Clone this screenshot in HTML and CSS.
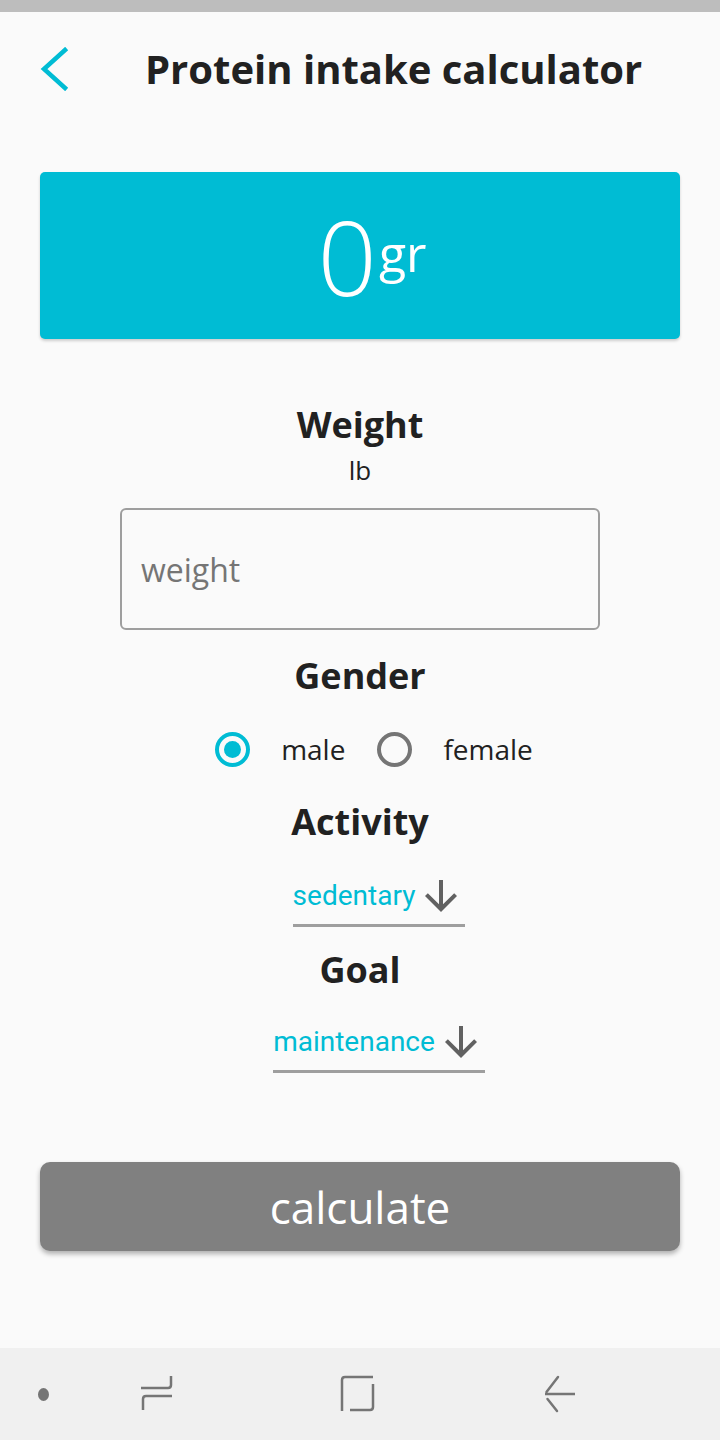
FILE: index.html
```html
<!DOCTYPE html>
<html lang="en">
<head>
    <meta charset="UTF-8">
    <meta name="viewport" content="width=device-width, initial-scale=1.0">
    <title>Protein intake calculator</title>
    <link rel="stylesheet" href="styles.css">
</head>
<body>

<div class="status-bar"></div>

<div class="screen">
    <div class="header">
        <button class="back-btn" aria-label="back">
            <svg width="30" height="44" viewBox="0 0 30 44">
                <path d="M25 3 L4 22 L25 41" fill="none" stroke="#00bcd4" stroke-width="4.5" stroke-linecap="square"/>
            </svg>
        </button>
        <h1 class="title">Protein intake calculator</h1>
    </div>

    <div class="result-card">
        <span class="result-value">0</span><span class="result-unit">gr</span>
    </div>

    <h2 class="label label-weight">Weight</h2>
    <div class="unit">lb</div>
    <div class="input-box">
        <input type="number" placeholder="weight">
    </div>

    <h2 class="label label-gender">Gender</h2>
    <div class="radio-row">
        <label class="radio">
            <span class="radio-circle checked"></span>
            <span class="radio-text">male</span>
        </label>
        <label class="radio">
            <span class="radio-circle"></span>
            <span class="radio-text">female</span>
        </label>
    </div>

    <h2 class="label label-activity">Activity</h2>
    <div class="dropdown dropdown-activity">
        <span class="dropdown-text">sedentary</span>
        <svg class="dropdown-arrow" width="48" height="48" viewBox="0 0 24 24">
            <path d="M20 12l-1.41-1.41L13 16.17V4h-2v12.17l-5.58-5.59L4 12l8 8 8-8z" fill="#616161"/>
        </svg>
    </div>

    <h2 class="label label-goal">Goal</h2>
    <div class="dropdown dropdown-goal">
        <span class="dropdown-text">maintenance</span>
        <svg class="dropdown-arrow" width="48" height="48" viewBox="0 0 24 24">
            <path d="M20 12l-1.41-1.41L13 16.17V4h-2v12.17l-5.58-5.59L4 12l8 8 8-8z" fill="#616161"/>
        </svg>
    </div>

    <button class="calc-btn">calculate</button>
</div>

<div class="nav-bar">
    <span class="nav-dot"></span>
    <svg class="nav-icon nav-recents" width="40" height="40" viewBox="0 0 40 40">
        <path d="M34 2 V11 Q34 14 31 14 H4" fill="none" stroke="#757575" stroke-width="2.5"/>
        <path d="M35 22 H9 Q6 22 6 25 V36" fill="none" stroke="#757575" stroke-width="2.5"/>
    </svg>
    <svg class="nav-icon nav-home" width="40" height="40" viewBox="0 0 40 40">
        <path d="M37 3 H9 Q6 3 6 6 V37" fill="none" stroke="#757575" stroke-width="2.5"/>
        <path d="M37 10 V33 Q37 36 34 36 H14" fill="none" stroke="#757575" stroke-width="2.5"/>
    </svg>
    <svg class="nav-icon nav-back" width="40" height="40" viewBox="0 0 40 40">
        <path d="M6 20 H36" fill="none" stroke="#757575" stroke-width="2.5"/>
        <path d="M19 3 L7.5 18" fill="none" stroke="#757575" stroke-width="2.5" stroke-linecap="round"/>
        <path d="M8.5 25 L18 37" fill="none" stroke="#757575" stroke-width="2.5" stroke-linecap="round"/>
    </svg>
</div>

</body>
</html>
```

FILE: styles.css
```css
body {
    margin: 0;
    width: 720px;
    height: 1440px;
    display: flex;
    flex-direction: column;
    background-color: #fafafa;
    font-family: "Open Sans", "DejaVu Sans", sans-serif;
    color: #212121;
}
.status-bar {
    height: 12px;
    background-color: #bdbdbd;
}
.screen {
    flex: 1;
    display: flex;
    flex-direction: column;
    align-items: center;
    padding: 0 40px;
}
.header {
    align-self: stretch;
    height: 114px;
    display: flex;
    align-items: center;
}
.back-btn {
    background: none;
    border: none;
    padding: 0;
    width: 30px;
    height: 44px;
    cursor: pointer;
}
.title {
    flex: 1;
    margin: 0 0 0 75px;
    font-size: 40px;
    font-weight: 700;
    line-height: 48px;
    white-space: nowrap;
}
.result-card {
    align-self: stretch;
    margin-top: 46px;
    height: 167px;
    background-color: #00bcd4;
    border-radius: 5px;
    box-shadow: 0 2px 3px rgba(0, 0, 0, 0.18);
    display: flex;
    align-items: center;
    justify-content: center;
    color: #ffffff;
    padding-left: 24px;
}
.result-value {
    font-size: 104px;
    font-weight: 300;
    line-height: 110px;
}
.result-unit {
    font-size: 50px;
    font-weight: 400;
    line-height: 60px;
    margin-top: -6px;
    margin-left: 2px;
}
.label {
    margin: 0;
    font-size: 36px;
    font-weight: 700;
    line-height: 40px;
}
.label-weight {
    margin-top: 66px;
}
.unit {
    font-size: 26px;
    line-height: 30px;
    margin-top: 10px;
}
.input-box {
    margin-top: 23px;
    width: 437px;
    height: 118px;
    border: 2px solid #9e9e9e;
    border-radius: 6px;
    display: flex;
    align-items: center;
    padding: 0 20px 0 19px;
}
.input-box input {
    border: none;
    background: transparent;
    outline: none;
    width: 100%;
    padding: 0;
    font-family: "Open Sans", sans-serif;
    font-size: 32px;
    color: #212121;
}
.input-box input::placeholder {
    color: #757575;
}
.label-gender {
    margin-top: 26px;
}
.radio-row {
    margin-top: 31px;
    height: 44px;
    display: flex;
    align-items: center;
    gap: 32px;
    margin-left: 28px;
}
.radio {
    display: flex;
    align-items: center;
    gap: 31px;
}
.radio-circle {
    width: 27px;
    height: 27px;
    border: 4px solid #757575;
    border-radius: 50%;
    position: relative;
}
.radio-circle.checked {
    border-color: #00bcd4;
}
.radio-circle.checked::after {
    content: "";
    position: absolute;
    left: 5px;
    top: 5px;
    width: 17px;
    height: 17px;
    border-radius: 50%;
    background-color: #00bcd4;
}
.radio-text {
    font-size: 28px;
    line-height: 36px;
}
.label-activity {
    margin-top: 31px;
}
.dropdown {
    display: flex;
    align-items: center;
    border-bottom: 3px solid #9e9e9e;
    padding-bottom: 4px;
    margin-left: 38px;
}
.dropdown-text {
    font-family: Roboto, sans-serif;
    font-size: 28px;
    line-height: 40px;
    color: #00bcd4;
}
.dropdown-arrow {
    margin-left: 2px;
}
.dropdown-activity {
    margin-top: 30px;
}
.label-goal {
    margin-top: 23px;
}
.dropdown-goal {
    margin-top: 28px;
}
.calc-btn {
    align-self: stretch;
    margin-top: 89px;
    height: 89px;
    border: none;
    border-radius: 10px;
    background-color: #808080;
    color: #ffffff;
    font-family: "Open Sans", sans-serif;
    font-size: 44px;
    box-shadow: 0 3px 5px rgba(0, 0, 0, 0.3);
}
.nav-bar {
    height: 92px;
    background-color: #f0f0f0;
    display: flex;
    align-items: center;
    padding-left: 38px;
}
.nav-dot {
    width: 11px;
    height: 13px;
    border-radius: 50%;
    background-color: #757575;
    margin-right: 88px;
}
.nav-recents {
    margin-right: 159px;
}
.nav-home {
    margin-right: 163px;
}
```
